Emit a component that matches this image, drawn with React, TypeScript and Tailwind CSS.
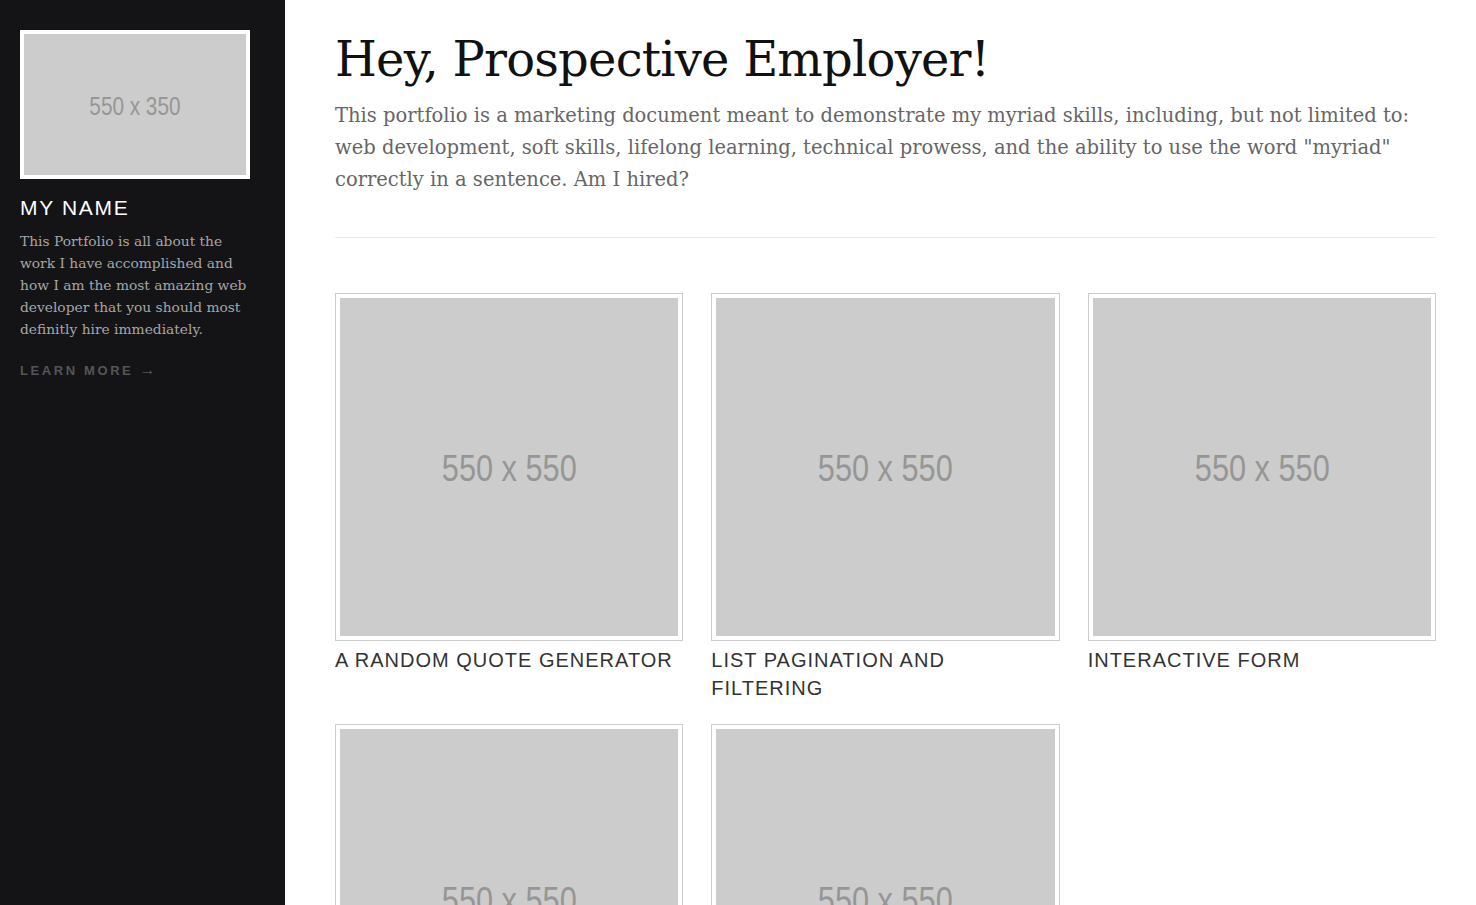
import React from "react";

const projects = [
  "A Random Quote Generator",
  "List Pagination and Filtering",
  "Interactive Form",
  "Project Four",
  "Project Five",
];

function Placeholder({ label, className }: { label: string; className: string }) {
  return (
    <div className={`flex items-center justify-center bg-[#cccccc] text-[#969696] ${className}`}>
      <span className="inline-block translate-y-[2px] scale-x-[0.83] font-['Liberation_Sans',Arial,sans-serif]">{label}</span>
    </div>
  );
}

export default function App() {
  return (
    <div className="flex min-h-screen bg-white font-['DejaVu_Serif',serif]">
      {/* Sidebar */}
      <aside className="w-[285px] shrink-0 bg-[#141416] px-5 pt-[30px]">
        <div className="w-[230px] border-4 border-white">
          <Placeholder label="550 x 350" className="h-[141px] text-[25px]" />
        </div>
        <h2 className="mt-[16px] font-['Liberation_Sans',Arial,sans-serif] text-[21px] leading-[26px] tracking-[0.08em] text-white">
          MY NAME
        </h2>
        <p className="mt-[9px] w-[232px] text-[13.8px] leading-[22px] text-[#a6a6a6]">
          This Portfolio is all about the work I have accomplished and how I am the most amazing web developer that you should most definitly hire immediately.
        </p>
        <a href="#" className="mt-[18px] block font-['Liberation_Sans',Arial,sans-serif] text-[13px] font-bold tracking-[0.2em] text-[#555555]">
          LEARN MORE <span className="text-[16px] font-normal">→</span>
        </a>
      </aside>

      {/* Main */}
      <main className="flex-1 pl-[50px] pt-[23px]">
        <div className="w-[1101px]">
          <h1 className="text-[48px] leading-[72px] tracking-[-0.8px] text-[#111111]">Hey, Prospective Employer!</h1>
          <p className="mt-[5px] text-[19.5px] leading-[32px] text-[#666666]">
            This portfolio is a marketing document meant to demonstrate my myriad skills, including, but not limited to: web development, soft skills, lifelong learning, technical prowess, and the ability to use the word "myriad" correctly in a sentence. Am I hired?
          </p>
          <hr className="mt-[41px] border-t border-[#ebebeb]" />

          <div className="mt-[55px] grid grid-cols-3 gap-x-[28px] gap-y-[22px]">
            {projects.map((title) => (
              <div key={title}>
                <div className="border border-[#cccccc] bg-white p-1">
                  <Placeholder label="550 x 550" className="aspect-square text-[37px]" />
                </div>
                <h3 className="mt-[5px] font-['Liberation_Sans',Arial,sans-serif] text-[20px] leading-[28px] tracking-[0.05em] uppercase text-[#333333]">
                  {title}
                </h3>
              </div>
            ))}
          </div>
        </div>
      </main>
    </div>
  );
}
